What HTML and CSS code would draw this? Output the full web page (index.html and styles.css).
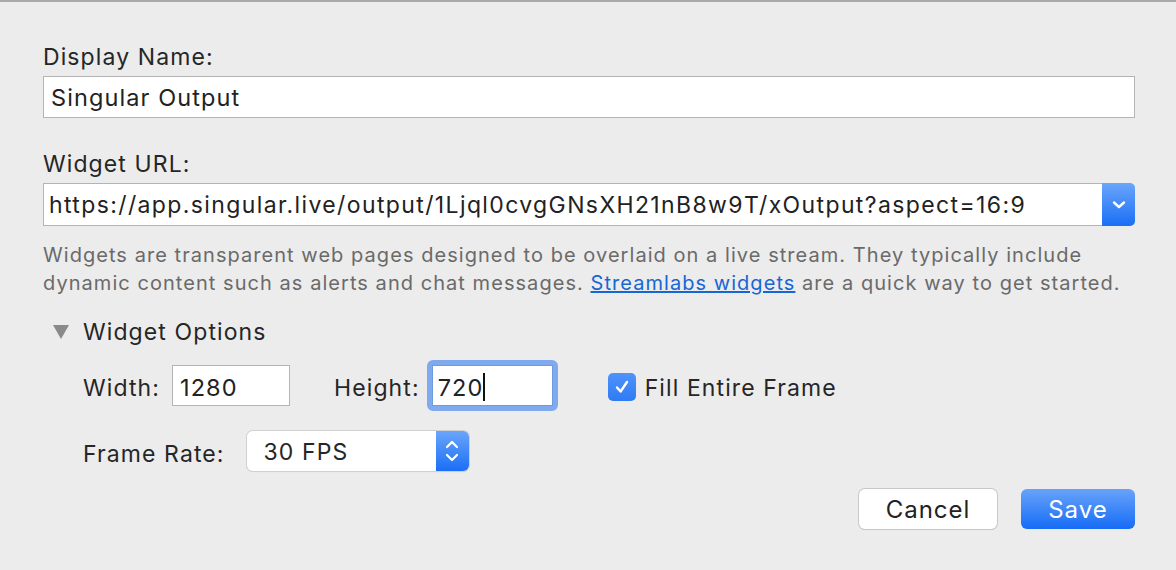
FILE: index.html
```html
<!DOCTYPE html>
<html>
<head>
<meta charset="utf-8">
<link rel="stylesheet" href="styles.css">
</head>
<body>
<div class="dialog">
  <div class="field">
    <div class="label">Display Name:</div>
    <div class="input wide">Singular Output</div>
  </div>
  <div class="field url-field">
    <div class="label">Widget URL:</div>
    <div class="combo">
      <div class="combo-text">https://app.singular.live/output/1Ljql0cvgGNsXH21nB8w9T/xOutput?aspect=16:9</div>
      <div class="combo-btn">
        <svg width="16" height="10" viewBox="0 0 16 10"><path d="M3 2.5 L8 7 L13 2.5" fill="none" stroke="#fff" stroke-width="2.4" stroke-linecap="round" stroke-linejoin="round"/></svg>
      </div>
    </div>
    <p class="help">Widgets are transparent web pages designed to be overlaid on a live stream. They typically include dynamic content such as alerts and chat messages. <a href="#">Streamlabs widgets</a> are a quick way to get started.</p>
  </div>
  <div class="options">
    <div class="options-head">
      <span class="tri"></span>
      <span>Widget Options</span>
    </div>
    <div class="row dims">
      <span class="lbl">Width:</span>
      <div class="input small">1280</div>
      <span class="lbl height-lbl">Height:</span>
      <div class="focus"><div class="input small2">720<span class="caret"></span></div></div>
      <label class="check">
        <span class="box">
          <svg width="20" height="20" viewBox="0 0 20 20"><path d="M5 10.5 L8.6 14.5 L15 5" fill="none" stroke="#fff" stroke-width="2.4" stroke-linecap="round" stroke-linejoin="round"/></svg>
        </span>
        <span class="lbl-text">Fill Entire Frame</span>
      </label>
    </div>
    <div class="row rate">
      <span class="lbl">Frame Rate:</span>
      <div class="select">
        <span class="select-text">30 FPS</span>
        <span class="stepper">
          <svg width="16" height="26" viewBox="0 0 16 26"><path d="M3 9 L8 4 L13 9" fill="none" stroke="#fff" stroke-width="2.2" stroke-linecap="round" stroke-linejoin="round"/><path d="M3 17 L8 22 L13 17" fill="none" stroke="#fff" stroke-width="2.2" stroke-linecap="round" stroke-linejoin="round"/></svg>
        </span>
      </div>
    </div>
  </div>
  <div class="buttons">
    <button class="btn cancel">Cancel</button>
    <button class="btn save">Save</button>
  </div>
</div>
</body>
</html>
```
FILE: styles.css
```css
html, body {
  margin: 0;
  padding: 0;
  background: #ececec;
  width: 1176px;
  height: 570px;
  overflow: hidden;
}
body {
  font-family: "Inter", "Liberation Sans", sans-serif;
  color: #262626;
  border-top: 2px solid #a9a9a9;
  box-sizing: border-box;
  letter-spacing: 1.1px;
}
.dialog {
  padding: 40px 41px 0 43px;
}
.label {
  font-size: 23px;
  line-height: 30px;
  margin-bottom: 4px;
}
.input {
  background: #fff;
  border: 1px solid #b4b4b4;
  box-sizing: border-box;
  font-size: 23.5px;
  display: flex;
  align-items: center;
  color: #222;
}
.wide {
  height: 42px;
  padding-left: 7px;
}
.url-field {
  margin-top: 31px;
}
.combo {
  display: flex;
  height: 43px;
}
.combo-text {
  flex: 1;
  background: #fff;
  border: 1px solid #b4b4b4;
  border-right: none;
  box-sizing: border-box;
  font-size: 23px;
  letter-spacing: 1.38px;
  display: flex;
  align-items: center;
  padding-left: 5px;
  white-space: nowrap;
  overflow: hidden;
  color: #222;
}
.combo-btn {
  width: 33px;
  background: linear-gradient(#6aa5fb, #1a6ff6);
  border-radius: 0 5px 5px 0;
  display: flex;
  align-items: center;
  justify-content: center;
}
.help {
  margin: 15px 0 0 0;
  font-size: 20px;
  letter-spacing: 1.05px;
  line-height: 28px;
  color: #6a6a6a;
}
.help a {
  color: #1666d6;
  text-decoration: underline;
}
.options {
  margin-top: 20px;
}
.options-head {
  display: flex;
  align-items: center;
  font-size: 23px;
  height: 30px;
}
.tri {
  width: 0;
  height: 0;
  border-left: 8px solid transparent;
  border-right: 8px solid transparent;
  border-top: 14px solid #8a8a8a;
  margin: 0 14px 0 10px;
}
.row {
  display: flex;
  align-items: center;
  padding-left: 40px;
  font-size: 23px;
}
.dims {
  margin-top: 12px;
  height: 52px;
}
.lbl, .lbl-text {
  padding-top: 5px;
}
.lbl {
  margin-right: 12px;
}
.small {
  width: 118px;
  height: 41px;
  padding-left: 7px;
  padding-top: 5px;
}
.height-lbl {
  margin-left: 44px;
  margin-right: 7px;
}
.focus {
  border: 5px solid #80aaee;
  border-radius: 6px;
  display: flex;
}
.small2 {
  width: 121px;
  height: 41px;
  padding-left: 5px;
  padding-top: 4px;
  border: 1px solid #6c9be2;
}
.caret {
  display: inline-block;
  width: 2px;
  height: 28px;
  background: #111;
  margin-left: 0;
}
.check {
  display: flex;
  align-items: center;
  margin-left: 50px;
  padding-top: 4px;
}
.check .lbl-text {
  padding-top: 1px;
}
.box {
  width: 28px;
  height: 28px;
  border-radius: 5px;
  background: linear-gradient(#4e93fb, #2f7bf5);
  display: flex;
  align-items: center;
  justify-content: center;
  margin-right: 9px;
}
.rate {
  margin-top: 20px;
}
.select {
  display: flex;
  margin-left: 10px;
  width: 222px;
  height: 40px;
  border-radius: 6px;
  box-shadow: 0 0 0 1px #d0d0d0, 0 1px 1px rgba(0,0,0,0.12);
  overflow: hidden;
}
.select-text {
  flex: 1;
  background: #fff;
  display: flex;
  align-items: center;
  padding-left: 17px;
  padding-top: 2px;
  font-size: 23px;
}
.stepper {
  width: 33px;
  background: linear-gradient(#6aa5fb, #1a6ff6);
  display: flex;
  align-items: center;
  justify-content: center;
}
.buttons {
  display: flex;
  justify-content: flex-end;
  gap: 24px;
  margin-top: 18px;
}
.btn {
  font-family: "Inter", "Liberation Sans", sans-serif;
  font-size: 24px;
  letter-spacing: 1px;
  height: 40px;
  border-radius: 6px;
  border: none;
  padding: 0;
}
.cancel {
  width: 138px;
  background: #fff;
  color: #222;
  box-shadow: 0 0 0 1px #c8c8c8, 0 1px 1px rgba(0,0,0,0.15);
}
.save {
  width: 114px;
  background: linear-gradient(#68a3fa, #166cf6);
  color: #fff;
}
```
